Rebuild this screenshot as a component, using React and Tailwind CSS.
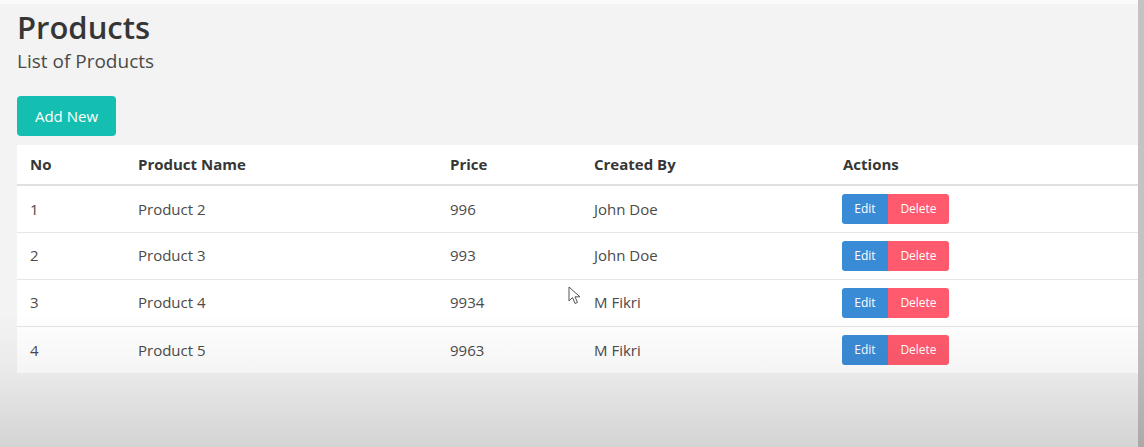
import React from "react";

const products = [
  { no: 1, name: "Product 2", price: 996, by: "John Doe" },
  { no: 2, name: "Product 3", price: 993, by: "John Doe" },
  { no: 3, name: "Product 4", price: 9934, by: "M Fikri" },
  { no: 4, name: "Product 5", price: 9963, by: "M Fikri" },
];

export default function App() {
  return (
    <div
      className="relative w-full h-[447px] flex overflow-hidden text-[#363636]"
      style={{ fontFamily: '"Open Sans", "Noto Sans", sans-serif' }}
    >
      {/* page */}
      <div className="flex-1 flex flex-col bg-[#f3f3f3]">
        <div className="h-[4px] bg-[#fafafa]" />
        <div className="pl-[17px]">
          <h1 className="mt-[5px] text-[31px] leading-[36px] font-semibold text-[#363636]">
            Products
          </h1>
          <h2 className="mt-[4px] text-[19px] leading-[25px] text-[#4a4a4a]">
            List of Products
          </h2>
          <button className="mt-[22px] h-[40px] w-[99px] rounded-[4px] bg-[#14bfb1] text-white text-[15px]">
            Add New
          </button>

          {/* table */}
          <table className="mt-[9px] w-full table-fixed bg-white border-collapse">
            <colgroup>
              <col className="w-[109px]" />
              <col className="w-[312px]" />
              <col className="w-[144px]" />
              <col className="w-[249px]" />
              <col />
            </colgroup>
            <thead>
              <tr className="border-b-2 border-[#e0e0e0]">
                <th className="h-[40px] px-[13px] text-left text-[15px] font-bold text-[#363636]">No</th>
                <th className="px-[12px] text-left text-[15px] font-bold text-[#363636]">Product Name</th>
                <th className="px-[12px] text-left text-[15px] font-bold text-[#363636]">Price</th>
                <th className="px-[12px] text-left text-[15px] font-bold text-[#363636]">Created By</th>
                <th className="px-[12px] text-left text-[15px] font-bold text-[#363636]">Actions</th>
              </tr>
            </thead>
            <tbody>
              {products.map((p, i) => (
                <tr
                  key={p.no}
                  className={i < products.length - 1 ? "border-b border-[#e6e6e6]" : ""}
                >
                  <td className="h-[47px] px-[13px] text-[15px] text-[#4a4a4a]">{p.no}</td>
                  <td className="px-[12px] text-[15px] text-[#4a4a4a]">{p.name}</td>
                  <td className="px-[12px] text-[15px] text-[#4a4a4a]">{p.price}</td>
                  <td className="px-[12px] text-[15px] text-[#4a4a4a]">{p.by}</td>
                  <td className="px-[11px]">
                    <div className="flex">
                      <button className="h-[30px] w-[46px] rounded-l-[3px] bg-[#3a8bd6] text-white text-[12px]">
                        Edit
                      </button>
                      <button className="h-[30px] w-[61px] rounded-r-[3px] bg-[#ff5a6d] text-white text-[12px]">
                        Delete
                      </button>
                    </div>
                  </td>
                </tr>
              ))}
            </tbody>
          </table>
        </div>
      </div>

      {/* right scrollbar edge */}
      <div className="w-[6px] bg-[#c3c3c3]" />

      {/* video vignette */}
      <div className="pointer-events-none absolute inset-0 bg-[linear-gradient(to_bottom,rgba(0,0,0,0)_0%,rgba(0,0,0,0)_70%,rgba(0,0,0,0.04)_83%,rgba(0,0,0,0.13)_100%)]" />

      {/* mouse cursor */}
      <svg
        className="pointer-events-none absolute left-[568px] top-[286px]"
        width="14"
        height="19"
        viewBox="0 0 14 19"
      >
        <path
          d="M1 1 L1 15 L4.5 11.5 L7 17.5 L9.5 16.5 L7 10.8 L12 10.8 Z"
          fill="#fff"
          stroke="#555"
          strokeWidth="1"
          strokeLinejoin="round"
        />
      </svg>
    </div>
  );
}
